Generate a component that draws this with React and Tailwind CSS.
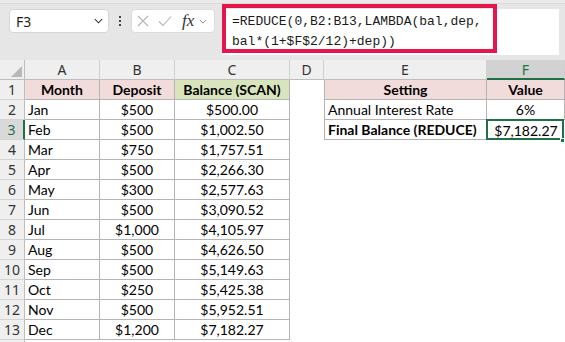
import React from "react";

const cellFont = { fontFamily: "Lato, 'Liberation Sans', sans-serif" };
const uiFont = { fontFamily: "'Noto Sans', 'Open Sans', sans-serif" };

const rows = [
   ["Jan", "$500", "$500.00"],
   ["Feb", "$500", "$1,002.50"],
   ["Mar", "$750", "$1,757.51"],
   ["Apr", "$500", "$2,266.30"],
   ["May", "$300", "$2,577.63"],
   ["Jun", "$500", "$3,090.52"],
   ["Jul", "$1,000", "$4,105.97"],
   ["Aug", "$500", "$4,626.50"],
   ["Sep", "$500", "$5,149.63"],
   ["Oct", "$250", "$5,425.38"],
   ["Nov", "$500", "$5,952.51"],
   ["Dec", "$1,200", "$7,182.27"],
];

const Chevron = ({ className }) => (
   <svg viewBox="0 0 10 6" className={className} fill="none" stroke="currentColor" strokeWidth="1.2">
      <path d="M1 1l4 4 4-4" />
   </svg>
);

const FormulaBar = () => (
   <div className="relative h-[60px] bg-[#e6e6e6]">
      <div className="h-[4px] bg-[#ebebeb] border-b border-[#d9d9d9]" />
      <div className="flex items-start pl-[9px] pt-[5px]">
         <div className="w-[100px] h-[24px] bg-white rounded-[4px] border border-[#d6d6d6] flex items-center justify-between pl-[6px] pr-[5px]">
            <span className="text-[14px] text-[#1f1f1f]" style={uiFont}>F3</span>
            <Chevron className="w-[9px] h-[6px] text-[#333]" />
         </div>
         <div className="w-[22px] h-[24px] flex flex-col items-center justify-center gap-[2px]">
            <span className="w-[2px] h-[2px] bg-[#444]" />
            <span className="w-[2px] h-[2px] bg-[#444]" />
            <span className="w-[2px] h-[2px] bg-[#444]" />
         </div>
         <div className="w-[84px] h-[24px] bg-white rounded-[4px] border border-[#dcdcdc] flex items-center pl-[5px]">
            <svg viewBox="0 0 12 12" className="w-[12px] h-[12px]" fill="none" stroke="#b5b5b5" strokeWidth="1.1">
               <path d="M1 1l10 10M11 1L1 11" />
            </svg>
            <svg viewBox="0 0 14 12" className="w-[14px] h-[12px] ml-[9px]" fill="none" stroke="#b5b5b5" strokeWidth="1.1">
               <path d="M1 6.5l4 4L13 1.5" />
            </svg>
            <span className="ml-[10px] text-[17px] italic leading-none text-[#333] -mt-[2px]" style={{ fontFamily: "'Liberation Serif', serif" }}>fx</span>
            <Chevron className="w-[8px] h-[5px] ml-[5px] text-[#888]" />
         </div>
         <div className="ml-[7px] w-[337px] h-[46px] bg-white pl-[10px] pt-[3px] text-[13px] leading-[20px] text-[#1a1a1a] whitespace-nowrap" style={{ fontFamily: "'Liberation Mono', monospace" }}>
            <div>=REDUCE(0,B2:B13,LAMBDA(bal,dep,</div>
            <div>bal*(1+$F$2/12)+dep))</div>
         </div>
      </div>
      <div className="absolute left-[222px] top-[4px] w-[275px] h-[49px] border-[4px] border-[#e3174b]" />
   </div>
);

const ColHeader = ({ w, label, active }) => (
   <div
      className={`${w} h-[20px] flex items-center justify-center text-[14px] border-r border-[#d0d0d0] ${active ? "bg-[#d2d2d2] text-[#1e7145] border-b-2 border-b-[#1e7145]" : "border-b border-b-[#bdbdbd] text-[#333]"}`}
      style={uiFont}
   >
      {label}
   </div>
);

const RowHeader = ({ n, active }) => (
   <div
      className={`w-[25px] h-[20px] flex items-center justify-center text-[14px] border-b border-[#d4d4d4] ${active ? "bg-[#d9d9d9] text-[#1e7145] border-r-2 border-r-[#1e7145]" : "bg-[#efefef] text-[#333] border-r border-r-[#bdbdbd]"}`}
      style={uiFont}
   >
      {n}
   </div>
);

export default function App() {
   return (
      <div className="w-[565px] h-[342px] overflow-hidden bg-white" style={cellFont}>
         <FormulaBar />
         <div className="flex bg-[#efefef]">
            <div className="w-[25px] h-[20px] border-r border-b border-[#bdbdbd] flex items-end justify-end p-[2px]">
               <svg viewBox="0 0 10 10" className="w-[11px] h-[11px]"><path d="M10 0V10H0Z" fill="#b8b8b8" /></svg>
            </div>
            <ColHeader w="w-[75px]" label="A" />
            <ColHeader w="w-[75px]" label="B" />
            <ColHeader w="w-[115px]" label="C" />
            <ColHeader w="w-[34px]" label="D" />
            <ColHeader w="w-[163px]" label="E" />
            <ColHeader w="w-[78px]" label="F" active />
         </div>
         <div className="flex text-[14px] text-black whitespace-nowrap">
            <RowHeader n={1} />
            <div className="w-[75px] h-[20px] bg-[#f2dcdb] border-r border-b border-[#b4b4b4] flex items-center justify-center font-bold">Month</div>
            <div className="w-[75px] h-[20px] bg-[#f2dcdb] border-r border-b border-[#b4b4b4] flex items-center justify-center font-bold">Deposit</div>
            <div className="w-[115px] h-[20px] bg-[#d8e4bc] border-r border-b border-[#b4b4b4] flex items-center justify-center font-bold">Balance (SCAN)</div>
            <div className="w-[34px] h-[20px]" />
            <div className="w-[163px] h-[20px] bg-[#f2dcdb] border-l border-r border-b border-[#b4b4b4] flex items-center justify-center font-bold">Setting</div>
            <div className="w-[78px] h-[20px] bg-[#f2dcdb] border-r border-b border-[#b4b4b4] flex items-center justify-center font-bold">Value</div>
         </div>
         {rows.map((r, i) => (
            <div key={r[0]} className="flex text-[14px] text-black whitespace-nowrap">
               <RowHeader n={i + 2} active={i === 1} />
               <div className="w-[75px] h-[20px] border-r border-b border-[#b4b4b4] flex items-center pl-[3px]">{r[0]}</div>
               <div className="w-[75px] h-[20px] border-r border-b border-[#b4b4b4] flex items-center justify-center">{r[1]}</div>
               <div className="w-[115px] h-[20px] border-r border-b border-[#b4b4b4] flex items-center justify-center">{r[2]}</div>
               <div className="w-[34px] h-[20px]" />
               {i === 0 && (
                  <>
                     <div className="w-[163px] h-[20px] border-l border-r border-b border-[#b4b4b4] flex items-center pl-[3px]">Annual Interest Rate</div>
                     <div className="w-[78px] h-[20px] border-r border-b border-[#b4b4b4] flex items-center justify-center">6%</div>
                  </>
               )}
               {i === 1 && (
                  <>
                     <div className="w-[163px] h-[20px] border-l border-r border-b border-[#b4b4b4] flex items-center pl-[3px] font-bold">Final Balance (REDUCE)</div>
                     <div className="relative w-[78px] h-[20px] flex items-center justify-center">
                        <div className="absolute -left-[1px] -top-[1px] w-[78px] h-[21px] border-2 border-[#1e7145]" />
                        <div className="absolute right-0 -bottom-[3px] w-[5px] h-[5px] bg-[#1e7145] border border-white" />
                        $7,182.27
                     </div>
                  </>
               )}
            </div>
         ))}
         <div className="flex">
            <div className="w-[25px] h-[20px] bg-[#efefef] border-r border-[#bdbdbd]" />
         </div>
      </div>
   );
}
